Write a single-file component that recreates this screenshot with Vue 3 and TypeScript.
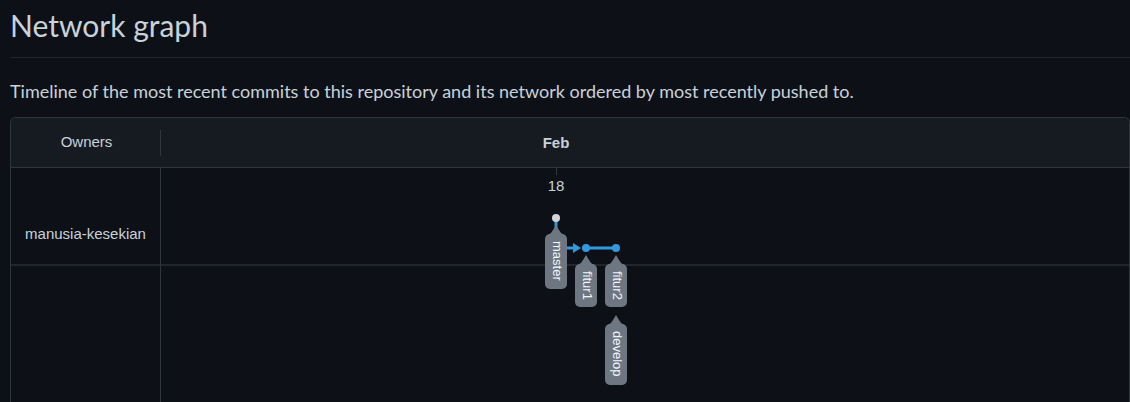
<script setup lang="ts">
interface Point {
  x: number
  y: number
}

interface Branch {
  name: string
  x: number
  y: number
  length: number
}

const commits: (Point & { root: boolean })[] = [
  { x: 395, y: 50, root: true },
  { x: 425, y: 80, root: false },
  { x: 455, y: 80, root: false },
]

const branches: Branch[] = [
  { name: 'master', x: 395, y: 56, length: 55 },
  { name: 'fitur1', x: 425, y: 86, length: 43 },
  { name: 'fitur2', x: 455, y: 86, length: 43 },
  { name: 'develop', x: 455, y: 146, length: 61 },
]
</script>

<template>
  <main class="page">
    <h1 class="title">Network graph</h1>
    <p class="intro">
      Timeline of the most recent commits to this repository and its network ordered by most recently pushed to.
    </p>

    <section class="network" aria-label="Commit network">
      <header class="head">
        <div class="owners">Owners</div>
        <div class="months"><strong class="month">Feb</strong></div>
      </header>
      <div class="body">
        <div class="owner-column">
          <div class="owner">manusia-kesekian</div>
        </div>
        <div class="timeline">
          <div class="lane"></div>
          <svg class="graph" role="img" aria-label="Branches by date">
            <path class="tick" d="M395.5 0V7" />
            <text class="day" x="395" y="23">18</text>
            <path class="link" d="M395 50V80H413M425 80H455" />
            <path class="arrow" d="M412 75L420 80L412 85Z" />
            <circle
              v-for="commit in commits"
              :key="commit.x"
              :class="commit.root ? 'dot root' : 'dot'"
              :cx="commit.x"
              :cy="commit.y"
              r="4"
            />
            <g
              v-for="branch in branches"
              :key="branch.name"
              :transform="`translate(${branch.x} ${branch.y})`"
            >
              <path class="tag" d="M0 1L3 6Q5 10 8 11H-8Q-5 10 -3 6Z" />
              <rect class="tag" x="-11" y="10" width="22" :height="branch.length" rx="5" />
              <text class="branch" x="17" y="3" transform="rotate(90)">{{ branch.name }}</text>
            </g>
          </svg>
        </div>
      </div>
    </section>
  </main>
</template>

<style>
body {
  background: #0d1117;
}
</style>

<style scoped>
.page {
  box-sizing: border-box;
  display: flex;
  flex-direction: column;
  min-height: 100vh;
  padding-left: 10px;
  background: #0d1117;
  color: #c9d1d9;
  font-family: Lato, "Segoe UI", sans-serif;
}

.title {
  margin: 0 0 20px;
  padding: 5px 0 12px;
  border-bottom: 1px solid #21262d;
  font-size: 30px;
  font-weight: 400;
  line-height: 40px;
}

.intro {
  margin: 0 0 12px;
  font-size: 18px;
  line-height: 27px;
}

.network {
  display: flex;
  flex: 1;
  flex-direction: column;
  border: 1px solid #30363d;
  border-bottom: 0;
  border-radius: 6px 6px 0 0;
  font-family: "Liberation Sans", Arial, sans-serif;
  font-size: 15px;
}

.head {
  display: flex;
  align-items: center;
  height: 49px;
  border-bottom: 1px solid #30363d;
  border-radius: 6px 6px 0 0;
  background: #161b22;
}

.owners {
  box-sizing: border-box;
  width: 150px;
  padding: 0 0 2px 2px;
  border-right: 1px solid #30363d;
  line-height: 24px;
  text-align: center;
}

.months {
  flex: 1;
}

.month {
  display: block;
  width: 790px;
  text-align: center;
}

.body {
  display: flex;
  flex: 1;
}

.owner-column {
  box-sizing: border-box;
  width: 150px;
  border-right: 1px solid #30363d;
}

.owner,
.lane {
  box-sizing: border-box;
  height: 98px;
  border-bottom: 2px solid #21262d;
}

.owner {
  padding-top: 52px;
  line-height: 28px;
  text-align: center;
}

.timeline {
  position: relative;
  flex: 1;
}

.graph {
  position: absolute;
  inset: 0;
  width: 100%;
  height: 100%;
}

.tick {
  stroke: #30363d;
}

.day {
  fill: #c9d1d9;
  text-anchor: middle;
}

.link {
  fill: none;
  stroke: #3399dd;
  stroke-width: 3;
}

.arrow,
.dot {
  fill: #3399dd;
}

.dot.root {
  fill: #d0d4da;
}

.tag {
  fill: #6e7681;
}

.branch {
  fill: #f0f6fc;
  font-size: 13px;
}
</style>
